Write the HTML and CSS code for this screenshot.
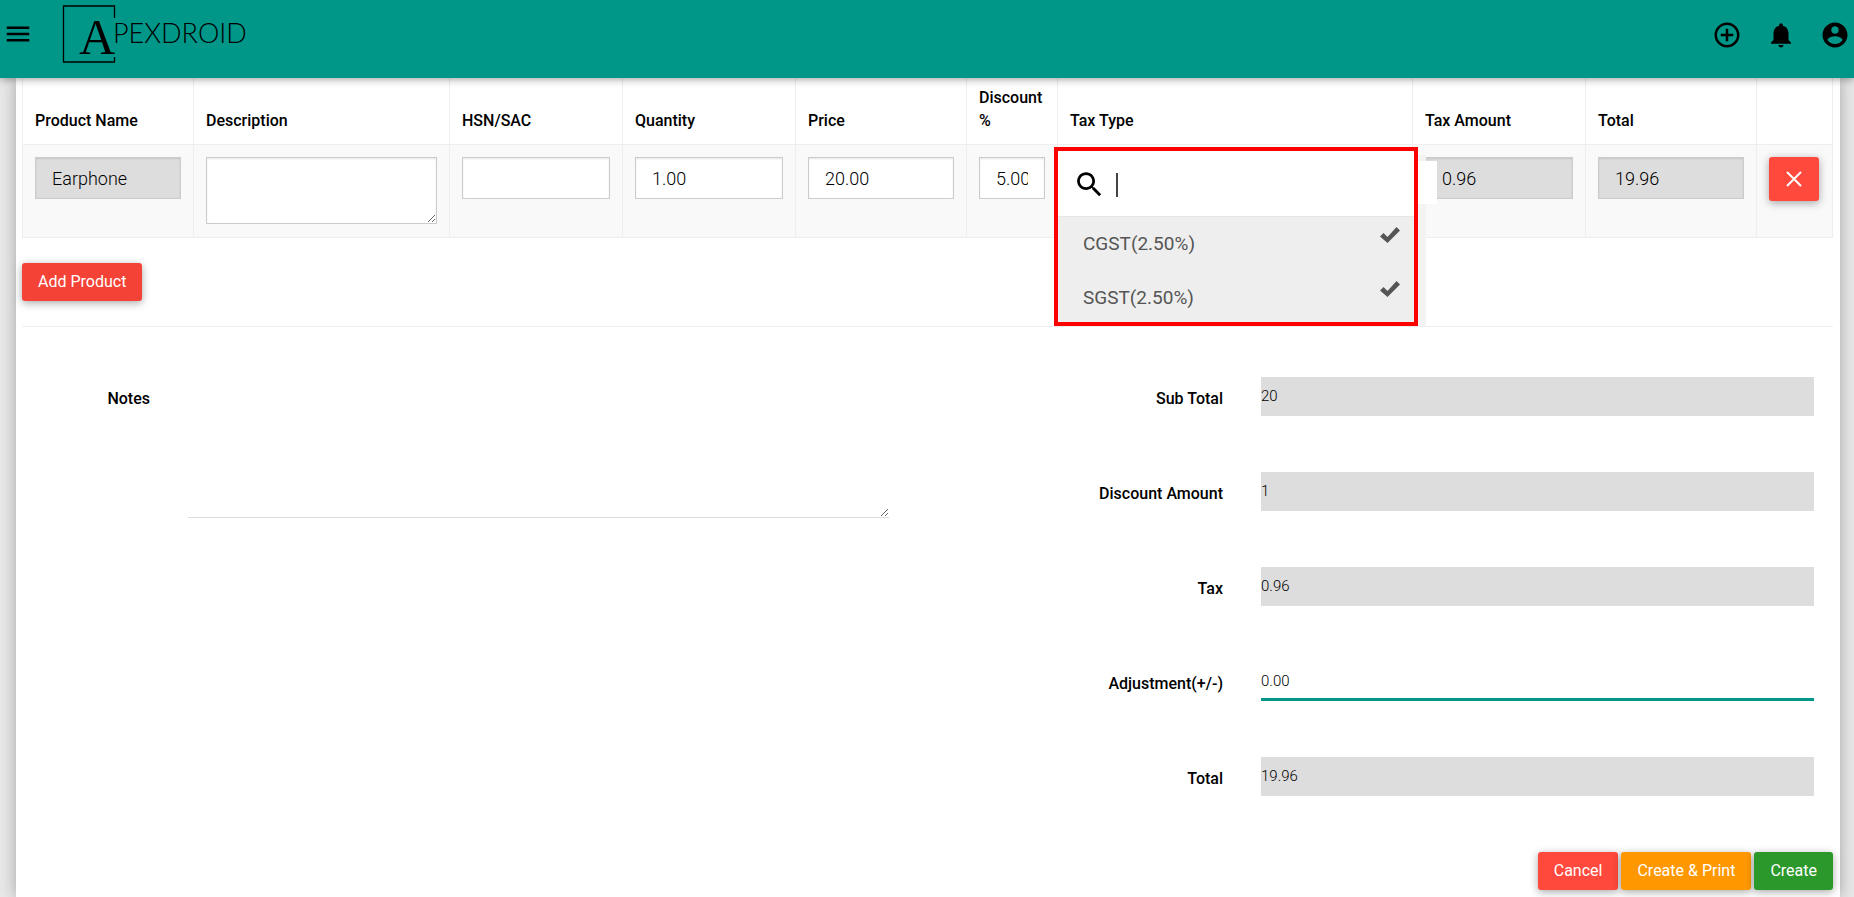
FILE: index.html
```html
<!DOCTYPE html>
<html lang="en">
<head>
<meta charset="utf-8">
<title>Apexdroid</title>
<link rel="stylesheet" href="styles.css">
</head>
<body>
<header class="topbar">
  <button class="icon-btn" aria-label="Menu"><svg class="icon" viewBox="0 0 24 24"><path d="M3 18h18v-2H3v2zm0-5h18v-2H3v2zm0-7v2h18V6H3z"/></svg></button>
  <a class="logo" href="#" aria-label="Apexdroid">
    <svg width="190" height="60" viewBox="0 0 190 60">
      <path class="logo-frame" d="M52.500 13V1H1.500V57H52.500V52"/>
      <text class="logo-initial" x="17" y="49">A</text>
      <text class="logo-name" x="51" y="38">PEXDROID</text>
    </svg>
  </a>
  <nav class="actions">
    <button class="icon-btn" aria-label="Add"><svg class="icon" viewBox="0 0 24 24"><path d="M13 7h-2v4H7v2h4v4h2v-4h4v-2h-4V7zm-1-5C6.480 2 2 6.480 2 12s4.480 10 10 10 10-4.480 10-10S17.520 2 12 2zm0 18c-4.410 0-8-3.590-8-8s3.590-8 8-8 8 3.590 8 8-3.590 8-8 8z"/></svg></button>
    <button class="icon-btn" aria-label="Notifications"><svg class="icon" viewBox="0 0 24 24"><path d="M12 22c1.100 0 2-.9 2-2h-4c0 1.100.89 2 2 2zm6-6v-5c0-3.070-1.640-5.640-4.500-6.320V4c0-.83-.67-1.500-1.500-1.500s-1.500.67-1.500 1.500v.68C7.630 5.360 6 7.920 6 11v5l-2 2v1h16v-1l-2-2z"/></svg></button>
    <button class="icon-btn" aria-label="Account"><svg class="icon" viewBox="0 0 24 24"><path d="M12 2C6.480 2 2 6.480 2 12s4.480 10 10 10 10-4.480 10-10S17.520 2 12 2zm0 3c1.660 0 3 1.340 3 3s-1.340 3-3 3-3-1.340-3-3 1.340-3 3-3zm0 14.200c-2.500 0-4.710-1.280-6-3.220.03-1.990 4-3.080 6-3.080 1.990 0 5.970 1.090 6 3.080-1.290 1.940-3.500 3.220-6 3.220z"/></svg></button>
  </nav>
</header>

<main class="card">
  <table class="products">
    <colgroup>
      <col class="c-std"><col class="c-desc"><col class="c-wide"><col class="c-wide"><col class="c-std">
      <col class="c-disc"><col class="c-tax"><col class="c-wide"><col class="c-std"><col class="c-del">
    </colgroup>
    <thead>
      <tr>
        <th>Product Name</th><th>Description</th><th>HSN/SAC</th><th>Quantity</th><th>Price</th>
        <th>Discount %</th><th>Tax Type</th><th>Tax Amount</th><th>Total</th><th></th>
      </tr>
    </thead>
    <tbody>
      <tr>
        <td><input class="field" aria-label="Product Name" value="Earphone" readonly></td>
        <td><textarea class="field area" aria-label="Description"></textarea></td>
        <td><input class="field" aria-label="HSN/SAC"></td>
        <td><input class="field" aria-label="Quantity" value="1.00"></td>
        <td><input class="field" aria-label="Price" value="20.00"></td>
        <td><input class="field" aria-label="Discount %" value="5.00"></td>
        <td class="tax-cell">
          <div class="tax-shade"></div>
          <div class="tax-menu">
            <label class="search">
              <svg class="search-icon" viewBox="0 0 24 24"><path d="M15.500 14h-.79l-.28-.27C15.410 12.590 16 11.110 16 9.500 16 5.910 13.090 3 9.500 3S3 5.910 3 9.500 5.910 16 9.500 16c1.610 0 3.090-.59 4.230-1.570l.27.28v.79l5 4.990L20.490 19l-4.990-5zm-6 0C7.010 14 5 11.990 5 9.500S7.010 5 9.500 5 14 7.010 14 9.500 11.990 14 9.500 14z"/></svg>
              <span class="caret"></span>
              <input class="search-input" aria-label="Search taxes">
            </label>
            <button class="option"><span>CGST(2.50%)</span><svg class="check" viewBox="0 0 20 16"><path d="M0 9.500L3.500 6l4 4L16.500 0 20 3.500 7.500 16z"/></svg></button>
            <button class="option"><span>SGST(2.50%)</span><svg class="check" viewBox="0 0 20 16"><path d="M0 9.500L3.500 6l4 4L16.500 0 20 3.500 7.500 16z"/></svg></button>
          </div>
        </td>
        <td><input class="field" aria-label="Tax Amount" value="0.96" readonly></td>
        <td><input class="field" aria-label="Total" value="19.96" readonly></td>
        <td><button class="btn delete" aria-label="Remove product"><svg class="cross" viewBox="0 0 16 16"><path d="M1 1l14 14M15 1L1 15"/></svg></button></td>
      </tr>
    </tbody>
  </table>

  <div class="add-row"><button class="btn red">Add Product</button></div>

  <form class="summary">
    <label class="notes-label" for="notes">Notes</label>
    <textarea class="notes" id="notes"></textarea>
    <label class="sum-label" for="sub">Sub Total</label><input class="sum" id="sub" value="20" readonly>
    <label class="sum-label" for="disc">Discount Amount</label><input class="sum" id="disc" value="1" readonly>
    <label class="sum-label" for="tax">Tax</label><input class="sum" id="tax" value="0.96" readonly>
    <label class="sum-label" for="adj">Adjustment(+/-)</label><input class="sum" id="adj" value="0.00">
    <label class="sum-label" for="total">Total</label><input class="sum" id="total" value="19.96" readonly>
  </form>

  <div class="footer">
    <button class="btn cancel">Cancel</button>
    <button class="btn orange">Create &amp; Print</button>
    <button class="btn green">Create</button>
  </div>
</main>
</body>
</html>
```
FILE: styles.css
```css
* { box-sizing: border-box; }

body {
  margin: 0;
  min-height: 100vh;
  display: flex;
  flex-direction: column;
  background: #e8e8e8;
  color: #000;
  font: 400 16px/23px Roboto, sans-serif;
}

button, input, textarea { font-family: inherit; color: inherit; outline: 0; }
button { cursor: pointer; }

.topbar {
  position: sticky;
  top: 0;
  z-index: 2;
  display: flex;
  align-items: flex-start;
  height: 78px;
  padding: 5px 4px 0 3px;
  background: #009688;
  box-shadow: 0 1px 8px rgba(0, 0, 0, .4);
}
.icon-btn { display: flex; margin-top: 14px; padding: 0; border: 0; background: none; }
.icon { width: 30px; height: 30px; }
.logo { display: flex; margin-left: 29px; color: #000; }
.logo-frame { fill: none; stroke: #000; stroke-width: 1.300; }
.logo-initial { font: 50px "Liberation Serif", serif; }
.logo-name { font: 300 27px Lato, sans-serif; }
.actions { display: flex; gap: 24px; margin-left: auto; }
.actions .icon-btn { margin-top: 15px; }

.card {
  flex: 1;
  margin: 0 14px 0 16px;
  padding: 0 7px 7px 6px;
  background: #fff;
  box-shadow: 0 0 15px rgba(0, 0, 0, .3);
}

.products { width: 100%; table-layout: fixed; border-collapse: collapse; }
.c-std { width: 171px; }
.c-desc { width: 256px; }
.c-wide { width: 173px; }
.c-disc { width: 91px; }
.c-del { width: 76px; }
.products th {
  height: 66px;
  padding: 0 12px 12px;
  border: 1px solid #eee;
  border-top: 0;
  font-weight: 500;
  text-align: left;
  vertical-align: bottom;
}
.products td {
  height: 93px;
  padding: 12px;
  border: 1px solid #eee;
  background: #f9f9f9;
  vertical-align: top;
}
.field {
  display: block;
  width: 100%;
  height: 42px;
  padding: 2px 16px 0;
  border: 1px solid #ccc;
  border-radius: 0;
  background: #fff;
  box-shadow: inset 0 1px 2px rgba(0, 0, 0, .1);
  font-size: 18px;
  font-weight: 300;
}
.field:read-only { background: #ddd; }
.area { height: 67px; resize: both; }

.products .tax-cell { position: relative; }
.tax-shade {
  position: absolute;
  top: 10px;
  right: -14px;
  width: 20px;
  height: 171px;
  background: #f3f3f3;
}
.tax-shade::before {
  content: "";
  position: absolute;
  top: 6px;
  left: 0;
  width: 31px;
  height: 43px;
  background: #fff;
}
.tax-menu {
  position: absolute;
  z-index: 1;
  top: 2px;
  left: -4px;
  right: -6px;
  border: 4px solid #f00;
  background: #eee;
}
.search {
  display: flex;
  align-items: center;
  height: 66px;
  padding: 3px 15px 0;
  border-bottom: 1px solid #e6e6e6;
  background: #fff;
}
.search-icon { width: 33px; height: 33px; }
.caret { width: 2px; height: 24px; margin-left: 10px; background: #444; }
.search-input { flex: 1; min-width: 0; border: 0; background: none; font-size: 18px; }
.option {
  display: flex;
  justify-content: space-between;
  width: 100%;
  height: 54px;
  padding: 10px 14px 0 25px;
  border: 0;
  background: none;
  color: #555;
  font-size: 19px;
  line-height: 34px;
}
.option:last-child { height: 51px; }
.check { width: 20px; height: 16px; fill: #555; }

.btn {
  height: 38px;
  padding: 0 16px;
  border: 0;
  border-radius: 3px;
  color: #fff;
  font-size: 16px;
  box-shadow: 0 2px 8px rgba(0, 0, 0, .35);
}
.red { background: #f44336; }
.cancel, .delete { background: #ff493c; }
.orange { background: #ff9800; }
.green { background: #2b982b; }
.delete { display: flex; align-items: center; justify-content: center; width: 50px; height: 44px; }
.cross { flex: none; width: 16px; height: 16px; fill: none; stroke: #fff; stroke-width: 2; }

.add-row { padding: 25px 0; border-bottom: 1px solid #eee; }

.summary {
  display: grid;
  grid-template-columns: 128px 701fr 296px 553fr;
  grid-auto-rows: 39px;
  gap: 56px 38px;
  padding: 50px 19px 56px 0;
}
.notes-label, .sum-label { padding-top: 2px; font-weight: 500; line-height: 39px; text-align: right; }
.notes-label { grid-area: 1 / 1; }
.sum-label { grid-column: 3; }
.notes {
  grid-area: 1 / 2 / span 5;
  height: 141px;
  border: 0;
  border-bottom: 1px solid #ddd;
  resize: vertical;
}
.sum {
  grid-column: 4;
  width: 100%;
  padding: 0;
  border: 0;
  font-size: 15px;
  font-weight: 300;
  box-shadow: inset 0 -3px #009688;
}
.sum:read-only { background: #ddd; box-shadow: none; }

.footer { display: flex; justify-content: flex-end; gap: 3px; }
```
